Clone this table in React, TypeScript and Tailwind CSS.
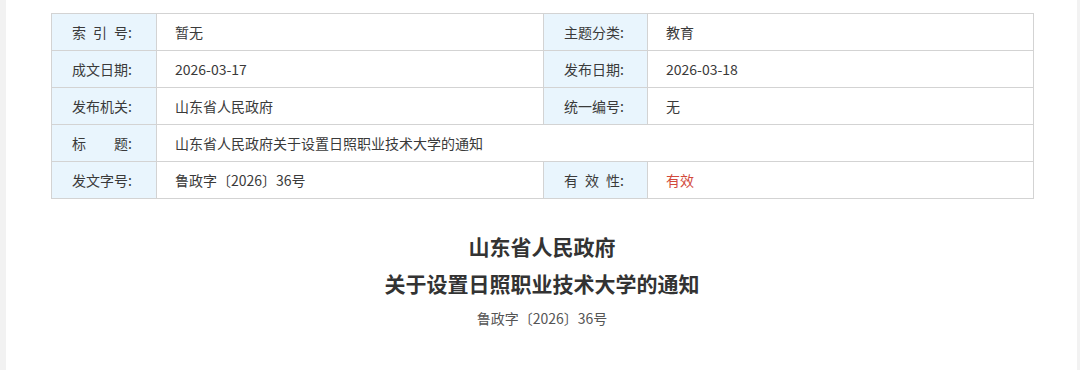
const rows: { label: string; value: string; label2?: string; value2?: string; red?: boolean }[] = [
  { label: '索\u2002引\u2002号:', value: '暂无', label2: '主题分类:', value2: '教育' },
  { label: '成文日期:', value: '2026-03-17', label2: '发布日期:', value2: '2026-03-18' },
  { label: '发布机关:', value: '山东省人民政府', label2: '统一编号:', value2: '无' },
  { label: '标　　题:', value: '山东省人民政府关于设置日照职业技术大学的通知' },
  { label: '发文字号:', value: '鲁政字〔2026〕36号', label2: '有\u2002效\u2002性:', value2: '有效', red: true },
]

export default function App() {
  return (
    <div
      className="h-[370px] w-[1080px] bg-[#f2f2f2] pl-[6px] pr-[3px]"
      style={{ fontFamily: '"Microsoft YaHei", "Noto Sans CJK SC", sans-serif' }}
    >
      <div className="h-full bg-white pt-[13px] pl-[45px] pr-[44px]">
        <table className="w-[982px] table-fixed border-collapse text-[14px] text-[#3a3a3a]">
          <colgroup>
            <col className="w-[105px]" />
            <col className="w-[387px]" />
            <col className="w-[104px]" />
            <col className="w-[386px]" />
          </colgroup>
          <tbody>
            {rows.map((r) => (
              <tr key={r.label} className="h-[37px]">
                <td className="border border-[#d3d3d3] bg-[#e9f5fd] pl-[20px] whitespace-pre">{r.label}</td>
                {r.label2 ? (
                  <>
                    <td className="border border-[#d3d3d3] pl-[18px]">{r.value}</td>
                    <td className="border border-[#d3d3d3] bg-[#e9f5fd] pl-[20px] whitespace-pre">{r.label2}</td>
                    <td className={`border border-[#d3d3d3] pl-[18px] ${r.red ? 'text-[#d24a3c]' : ''}`}>{r.value2}</td>
                  </>
                ) : (
                  <td colSpan={3} className="border border-[#d3d3d3] pl-[18px]">
                    {r.value}
                  </td>
                )}
              </tr>
            ))}
          </tbody>
        </table>

        {/* Document heading */}
        <div className="mt-[29px] flex flex-col items-center">
          <h1 className="text-[21px] font-bold leading-[37px] text-[#333]">山东省人民政府</h1>
          <h1 className="text-[21px] font-bold leading-[37px] text-[#333]">关于设置日照职业技术大学的通知</h1>
          <p className="mt-[6px] text-[14px] text-[#555]">鲁政字〔2026〕36号</p>
        </div>
      </div>
    </div>
  )
}
